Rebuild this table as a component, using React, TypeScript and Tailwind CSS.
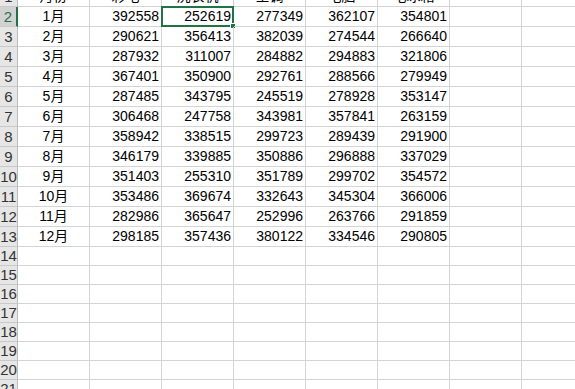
import React from "react";

const headers = ["月份", "彩电", "洗衣机", "空调", "电脑", "电冰箱"];

const data: number[][] = [
    [392558, 252619, 277349, 362107, 354801],
    [290621, 356413, 382039, 274544, 266640],
    [287932, 311007, 284882, 294883, 321806],
    [367401, 350900, 292761, 288566, 279949],
    [287485, 343795, 245519, 278928, 353147],
    [306468, 247758, 343981, 357841, 263159],
    [358942, 338515, 299723, 289439, 291900],
    [346179, 339885, 350886, 296888, 337029],
    [351403, 255310, 351789, 299702, 354572],
    [353486, 369674, 332643, 345304, 366006],
    [282986, 365647, 252996, 263766, 291859],
    [298185, 357436, 380122, 334546, 290805],
];

const font = { fontFamily: '"Liberation Sans", "Noto Sans CJK SC", sans-serif' };

function RowHeader({ n, selected }: { n: number; selected?: boolean }) {
    return (
        <div
            className={`w-[18px] shrink-0 flex items-end justify-center overflow-visible border-b border-[#c9c9c9] text-[15px] leading-[19px] ${
                selected
                    ? "bg-[#d2d2d2] text-[#217346] border-r-2 border-r-[#217346]"
                    : "bg-[#e6e6e6] text-[#333] border-r border-r-[#bdbdbd]"
            }`}
        >
            <span className="whitespace-nowrap">{n}</span>
        </div>
    );
}

function Cell({ children, center, selected }: { children?: React.ReactNode; center?: boolean; selected?: boolean }) {
    return (
        <div
            className={`relative w-[72px] shrink-0 flex items-end border-r border-b border-[#d4d4d4] text-[14px] leading-[19px] text-black ${
                center ? "justify-center" : "justify-end pr-[2px]"
            }`}
        >
            <span className="whitespace-nowrap">{children}</span>
            {selected && (
                <div className="absolute -left-[1px] -top-[1px] w-[73px] h-[21px] border-2 border-[#217346]">
                    <div className="absolute -right-[4px] -bottom-[4px] w-[6px] h-[6px] bg-[#217346] border border-white" />
                </div>
            )}
        </div>
    );
}

export default function App() {
    const emptyRows = [14, 15, 16, 17, 18, 19, 20, 21];
    return (
        <div className="w-[575px] h-[389px] overflow-hidden bg-white" style={font}>
            <div className="-mt-[13px] w-[594px]">
                {/* header row 1 */}
                <div className="flex h-[20px]">
                    <RowHeader n={1} />
                    {headers.map((h, i) => (
                        <Cell key={i} center>{h}</Cell>
                    ))}
                    <Cell />
                    <Cell />
                </div>

                {data.map((row, r) => (
                    <div key={r} className="flex h-[20px]">
                        <RowHeader n={r + 2} selected={r === 0} />
                        <Cell center>{r + 1}月</Cell>
                        {row.map((v, c) => (
                            <Cell key={c} selected={r === 0 && c === 1}>{v}</Cell>
                        ))}
                        <Cell />
                        <Cell />
                    </div>
                ))}

                {emptyRows.map((n) => (
                    <div key={n} className="flex h-[19px]">
                        <RowHeader n={n} />
                        {[0, 1, 2, 3, 4, 5, 6, 7].map((c) => (
                            <Cell key={c} />
                        ))}
                    </div>
                ))}
            </div>
        </div>
    );
}
